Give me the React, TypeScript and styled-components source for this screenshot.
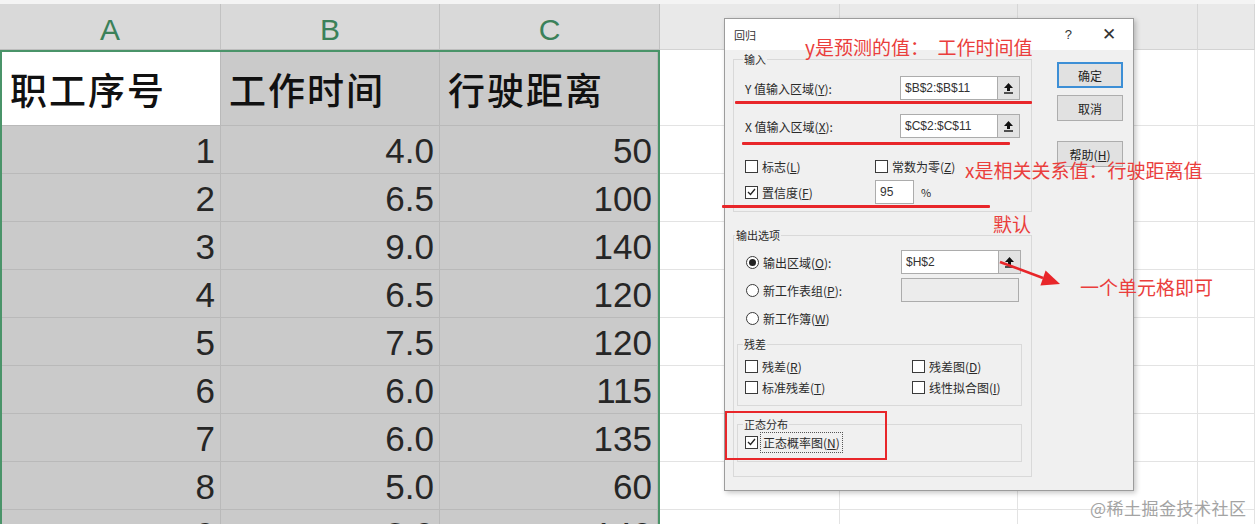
import styled, { createGlobalStyle } from "styled-components";

const GlobalStyle = createGlobalStyle`
  html, body {
    margin: 0;
    padding: 0;
    background: #fff;
  }
  body {
    font-family: "Noto Sans CJK SC", "Noto Sans", sans-serif;
    overflow: hidden;
  }
`;

const CJK = `"Noto Sans CJK SC", "Noto Sans", sans-serif`;
const NUM = `"Liberation Sans", Arial, sans-serif`;

const Page = styled.div`
  position: relative;
  width: 1255px;
  height: 524px;
  overflow: hidden;
  background: #fff;
`;

/* ---------- spreadsheet ---------- */

const TopStrip = styled.div`
  height: 4px;
  background: #f4f4f4;
`;

const HeaderRow = styled.div`
  display: flex;
  height: 46px;
`;

const HeaderCell = styled.div<{ $w: number; $sel?: boolean }>`
  flex: 0 0 ${(p) => p.$w}px;
  box-sizing: border-box;
  display: flex;
  align-items: center;
  justify-content: center;
  padding-top: 6px;
  background: ${(p) => (p.$sel ? "#d9d9d9" : "#e9e9e9")};
  border-right: 1px solid ${(p) => (p.$sel ? "#c2c2c2" : "#d6d6d6")};
  border-bottom: 1px solid ${(p) => (p.$sel ? "#bdbdbd" : "#d3d3d3")};
  color: #3b8159;
  font-family: ${NUM};
  font-size: 30px;
`;

const Body = styled.div`
  display: flex;
`;

const Selection = styled.div`
  flex: 0 0 660px;
  box-sizing: border-box;
  border: 2px solid #4a9469;
  border-bottom: none;
  height: 474px;
  overflow: hidden;
`;

const Plain = styled.div`
  flex: 1;
  height: 474px;
  overflow: hidden;
`;

const Row = styled.div<{ $h: number }>`
  display: flex;
  height: ${(p) => p.$h}px;
`;

const Cell = styled.div<{ $w: number; $tone: "white" | "gray" | "plain"; $right?: boolean }>`
  flex: 0 0 ${(p) => p.$w}px;
  box-sizing: border-box;
  display: flex;
  align-items: center;
  justify-content: ${(p) => (p.$right ? "flex-end" : "flex-start")};
  padding: ${(p) => (p.$right ? "2px 5px 0 0" : "0 0 0 8px")};
  background: ${(p) => (p.$tone === "gray" ? "#cacaca" : "#fff")};
  border-right: 1px solid ${(p) => (p.$tone === "plain" ? "#e3e3e3" : "#b9b9b9")};
  border-bottom: 1px solid ${(p) => (p.$tone === "plain" ? "#e3e3e3" : "#b9b9b9")};
  color: #1e1e1e;
  white-space: nowrap;
`;

const TitleText = styled.span`
  font-family: ${CJK};
  font-size: 37px;
  font-weight: 500;
  letter-spacing: 2px;
  color: #111;
`;

const NumText = styled.span`
  font-family: ${NUM};
  font-size: 35px;
  color: #262626;
`;

/* ---------- dialog ---------- */

const Dialog = styled.div`
  position: absolute;
  left: 724px;
  top: 18px;
  width: 410px;
  height: 473px;
  box-sizing: border-box;
  border: 1px solid #9c9c9c;
  background: #f0f0f0;
  box-shadow: 2px 2px 5px rgba(0, 0, 0, 0.22);
  font-family: ${CJK};
  font-size: 12px;
  color: #2a2a2a;
`;

const TitleBar = styled.div`
  display: flex;
  align-items: center;
  height: 31px;
  padding: 0 17px 0 9px;
  background: #fff;
`;

const TitleLabel = styled.span`
  flex: 1;
  font-size: 11px;
  color: #333;
`;

const TitleIcon = styled.span<{ $gap?: number }>`
  margin-left: ${(p) => p.$gap ?? 0}px;
  font-family: ${NUM};
  font-size: ${(p) => (p.$gap ? 17 : 13)}px;
  color: #333;
`;

const DialogBody = styled.div`
  display: flex;
  padding-left: 8px;
`;

const LeftCol = styled.div`
  flex: 0 0 299px;
  min-width: 0;
  display: flex;
  flex-direction: column;
`;

const RightCol = styled.div`
  flex: 0 0 66px;
  margin-left: 25px;
  padding-top: 12px;
  display: flex;
  flex-direction: column;
`;

const Button = styled.div<{ $primary?: boolean; $gap: number }>`
  height: 26px;
  margin-top: ${(p) => p.$gap}px;
  box-sizing: border-box;
  display: flex;
  align-items: center;
  justify-content: center;
  background: #e1e1e1;
  border: ${(p) => (p.$primary ? "2px solid #3d8fd6" : "1px solid #adadad")};
  font-size: 12px;
  color: #222;
`;

const Group = styled.fieldset<{ $top: number; $pad: string }>`
  margin: ${(p) => p.$top}px 0 0 0;
  padding: ${(p) => p.$pad};
  border: 1px solid #d9d9d9;
  min-width: 0;
  min-inline-size: 0;
  display: flex;
  flex-direction: column;
`;

const Legend = styled.legend`
  padding: 0 1px;
  margin-left: -2px;
  line-height: 16px;
  font-size: 11px;
  color: #2a2a2a;
`;

const FieldRow = styled.div<{ $h: number; $gap?: number; $indent?: number }>`
  display: flex;
  align-items: center;
  height: ${(p) => p.$h}px;
  margin-top: ${(p) => p.$gap ?? 0}px;
  padding-left: ${(p) => p.$indent ?? 0}px;
`;

const FieldLabel = styled.span<{ $w: number }>`
  flex: 0 1 ${(p) => p.$w}px;
  min-width: 0;
  display: flex;
  align-items: center;
  white-space: nowrap;
`;

const TextBox = styled.div<{ $w: number; $disabled?: boolean }>`
  flex: 0 0 ${(p) => p.$w}px;
  height: 24px;
  box-sizing: border-box;
  display: flex;
  align-items: center;
  padding-left: 4px;
  background: ${(p) => (p.$disabled ? "#ececec" : "#fff")};
  border: 1px solid #acacac;
  font-family: ${NUM};
  font-size: 12px;
  color: #333;
`;

const PickButton = styled.div`
  flex: 0 0 22px;
  height: 24px;
  box-sizing: border-box;
  display: flex;
  align-items: center;
  justify-content: center;
  background: #e3e3e3;
  border: 1px solid #acacac;
  border-left: none;
`;

const Box = styled.span<{ $round?: boolean }>`
  width: 13px;
  height: 13px;
  box-sizing: border-box;
  flex: 0 0 13px;
  display: inline-flex;
  align-items: center;
  justify-content: center;
  margin-right: 4px;
  background: #fff;
  border: 1px solid #3a3a3a;
  border-radius: ${(p) => (p.$round ? "50%" : "0")};
`;

const Dot = styled.span`
  width: 7px;
  height: 7px;
  border-radius: 50%;
  background: #222;
`;

const Focus = styled.span`
  outline: 1px dotted #555;
  outline-offset: 1px;
  padding: 0 1px;
`;

const Unit = styled.span`
  margin-left: 7px;
  font-size: 11px;
`;

/* ---------- annotations ---------- */

const Note = styled.div<{ $x: number; $y: number }>`
  position: absolute;
  left: ${(p) => p.$x}px;
  top: ${(p) => p.$y}px;
  font-family: ${CJK};
  font-size: 19px;
  line-height: 20px;
  color: #ea3e3c;
  white-space: pre;
`;

const RedLine = styled.div<{ $x: number; $y: number; $w: number }>`
  position: absolute;
  left: ${(p) => p.$x}px;
  top: ${(p) => p.$y}px;
  width: ${(p) => p.$w}px;
  height: 3px;
  background: #e8262a;
  border-radius: 1px;
`;

const RedBox = styled.div`
  position: absolute;
  left: 725px;
  top: 411px;
  width: 162px;
  height: 49px;
  box-sizing: border-box;
  border: 2px solid #e8262a;
`;

const ArrowSvg = styled.svg`
  position: absolute;
  left: 995px;
  top: 255px;
`;

const Watermark = styled.div`
  position: absolute;
  left: 1090px;
  top: 495px;
  font-family: ${CJK};
  font-size: 17px;
  color: #a3a3a3;
  letter-spacing: 0.5px;
`;

/* ---------- data ---------- */

const selCols = [219, 219, 218];
const plainCols = [180, 178, 180, 57];
const headCols = [221, 219, 220, 180, 178, 180, 57];

const data: [string, string, string][] = [
  ["1", "4.0", "50"],
  ["2", "6.5", "100"],
  ["3", "9.0", "140"],
  ["4", "6.5", "120"],
  ["5", "7.5", "120"],
  ["6", "6.0", "115"],
  ["7", "6.0", "135"],
  ["8", "5.0", "60"],
  ["9", "8.0", "140"],
];

function UpIcon() {
  return (
    <svg width="9" height="11" viewBox="0 0 9 11">
      <polygon points="4.5,0 9,5 6,5 6,8 3,8 3,5 0,5" fill="#111" />
      <rect x="0" y="9.3" width="9" height="1.4" fill="#111" />
    </svg>
  );
}

function Check({ checked, label }: { checked?: boolean; label: React.ReactNode }) {
  return (
    <>
      <Box>
        {checked && (
          <svg width="9" height="8" viewBox="0 0 9 8">
            <polyline points="1,4 3.5,6.5 8,1" fill="none" stroke="#222" strokeWidth="1.3" />
          </svg>
        )}
      </Box>
      {label}
    </>
  );
}

function Radio({ on, label }: { on?: boolean; label: React.ReactNode }) {
  return (
    <FieldLabel $w={155}>
      <Box $round>{on && <Dot />}</Box>
      {label}
    </FieldLabel>
  );
}

export default function App() {
  return (
    <Page>
      <GlobalStyle />
      <TopStrip />
      <HeaderRow>
        {headCols.map((w, i) => (
          <HeaderCell key={i} $w={w} $sel={i < 3}>
            {["A", "B", "C"][i] ?? ""}
          </HeaderCell>
        ))}
      </HeaderRow>

      <Body>
        <Selection>
          <Row $h={74}>
            <Cell $w={selCols[0]} $tone="white">
              <TitleText>职工序号</TitleText>
            </Cell>
            <Cell $w={selCols[1]} $tone="gray">
              <TitleText>工作时间</TitleText>
            </Cell>
            <Cell $w={selCols[2]} $tone="gray">
              <TitleText>行驶距离</TitleText>
            </Cell>
          </Row>
          {data.map((r, ri) => (
            <Row key={ri} $h={48}>
              {r.map((v, ci) => (
                <Cell key={ci} $w={selCols[ci]} $tone="gray" $right>
                  <NumText>{v}</NumText>
                </Cell>
              ))}
            </Row>
          ))}
        </Selection>
        <Plain>
          {[76, 48, 48, 48, 48, 48, 48, 48, 48, 48].map((h, ri) => (
            <Row key={ri} $h={h}>
              {plainCols.map((w, ci) => (
                <Cell key={ci} $w={w} $tone="plain" />
              ))}
            </Row>
          ))}
        </Plain>
      </Body>

      <Dialog>
        <TitleBar>
          <TitleLabel>回归</TitleLabel>
          <TitleIcon>?</TitleIcon>
          <TitleIcon $gap={30}>✕</TitleIcon>
        </TitleBar>
        <DialogBody>
          <LeftCol>
            <Group $top={1} $pad="0 8px 6px 11px">
              <Legend>输入</Legend>
              <FieldRow $h={26} $gap={8}>
                <FieldLabel $w={155}>
                  Y 值输入区域(<u>Y</u>):
                </FieldLabel>
                <TextBox $w={98}>$B$2:$B$11</TextBox>
                <PickButton>
                  <UpIcon />
                </PickButton>
              </FieldRow>
              <FieldRow $h={26} $gap={12}>
                <FieldLabel $w={155}>
                  X 值输入区域(<u>X</u>):
                </FieldLabel>
                <TextBox $w={98}>$C$2:$C$11</TextBox>
                <PickButton>
                  <UpIcon />
                </PickButton>
              </FieldRow>
              <FieldRow $h={20} $gap={17}>
                <FieldLabel $w={130}>
                  <Check label={<>标志(<u>L</u>)</>} />
                </FieldLabel>
                <FieldLabel $w={120}>
                  <Check label={<>常数为零(<u>Z</u>)</>} />
                </FieldLabel>
              </FieldRow>
              <FieldRow $h={26} $gap={3}>
                <FieldLabel $w={130}>
                  <Check checked label={<>置信度(<u>F</u>)</>} />
                </FieldLabel>
                <TextBox $w={39}>95</TextBox>
                <Unit>%</Unit>
              </FieldRow>
            </Group>

            <Group $top={15} $pad="0 9px 14px 3px">
              <Legend>输出选项</Legend>
              <FieldRow $h={26} $gap={6} $indent={9}>
                <Radio on label={<>输出区域(<u>O</u>):</>} />
                <TextBox $w={98}>$H$2</TextBox>
                <PickButton>
                  <UpIcon />
                </PickButton>
              </FieldRow>
              <FieldRow $h={26} $gap={2} $indent={9}>
                <Radio label={<>新工作表组(<u>P</u>):</>} />
                <TextBox $w={118} $disabled />
              </FieldRow>
              <FieldRow $h={26} $gap={2} $indent={9}>
                <Radio label={<>新工作簿(<u>W</u>)</>} />
              </FieldRow>

              <Group $top={5} $pad="0 6px 8px 7px">
                <Legend>残差</Legend>
                <FieldRow $h={20} $gap={4}>
                  <FieldLabel $w={167}>
                    <Check label={<>残差(<u>R</u>)</>} />
                  </FieldLabel>
                  <FieldLabel $w={100}>
                    <Check label={<>残差图(<u>D</u>)</>} />
                  </FieldLabel>
                </FieldRow>
                <FieldRow $h={20} $gap={1}>
                  <FieldLabel $w={167}>
                    <Check label={<>标准残差(<u>T</u>)</>} />
                  </FieldLabel>
                  <FieldLabel $w={100}>
                    <Check label={<>线性拟合图(<u>I</u>)</>} />
                  </FieldLabel>
                </FieldRow>
              </Group>

              <Group $top={10} $pad="0 6px 9px 7px">
                <Legend>正态分布</Legend>
                <FieldRow $h={20} $gap={0}>
                  <FieldLabel $w={167}>
                    <Check
                      checked
                      label={
                        <Focus>
                          正态概率图(<u>N</u>)
                        </Focus>
                      }
                    />
                  </FieldLabel>
                </FieldRow>
              </Group>
            </Group>
          </LeftCol>

          <RightCol>
            <Button $primary $gap={0}>
              确定
            </Button>
            <Button $gap={7}>取消</Button>
            <Button $gap={20}>
              帮助(<u>H</u>)
            </Button>
          </RightCol>
        </DialogBody>
      </Dialog>

      <RedLine $x={735} $y={101} $w={297} />
      <RedLine $x={742} $y={142} $w={268} />
      <RedLine $x={722} $y={205} $w={268} />
      <RedBox />
      <ArrowSvg width="72" height="40" viewBox="0 0 72 40">
        <line x1="5" y1="7" x2="48" y2="23" stroke="#e8262a" strokeWidth="2.5" />
        <polygon points="65,29 45.4,30.5 50.6,15.5" fill="#e8262a" />
      </ArrowSvg>

      <Note $x={805} $y={37}>y是预测的值：  工作时间值</Note>
      <Note $x={965} $y={160}>x是相关关系值：行驶距离值</Note>
      <Note $x={993} $y={214}>默认</Note>
      <Note $x={1080} $y={277}>一个单元格即可</Note>

      <Watermark>@稀土掘金技术社区</Watermark>
    </Page>
  );
}
